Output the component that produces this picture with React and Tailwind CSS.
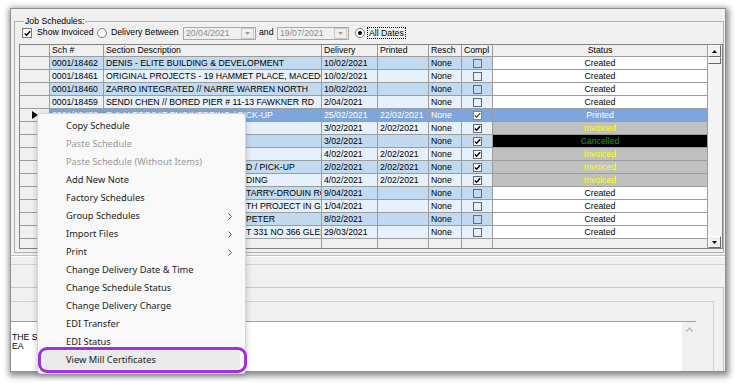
import React from "react";

const DARK = "bg-[#c2daf0]";
const LIGHT = "bg-[#e6f1fb]";
const SEL = "bg-[#7ea6dc]";

const rows = [
  { sch: "0001/18462", desc: "DENIS - ELITE BUILDING & DEVELOPMENT", del: "10/02/2021", pr: "", chk: false, status: "Created" },
  { sch: "0001/18461", desc: "ORIGINAL PROJECTS - 19 HAMMET PLACE, MACEDON", del: "10/02/2021", pr: "", chk: false, status: "Created" },
  { sch: "0001/18460", desc: "ZARRO INTEGRATED // NARRE WARREN NORTH", del: "10/02/2021", pr: "", chk: false, status: "Created" },
  { sch: "0001/18459", desc: "SENDI CHEN // BORED PIER # 11-13 FAWKNER RD", del: "2/04/2021", pr: "", chk: false, status: "Created" },
  { sch: "0001/18458", desc: "R & M TORCAT ENGINEERING / PICK-UP", del: "25/02/2021", pr: "22/02/2021", chk: true, status: "Printed", sel: true },
  { sch: "0001/18457", hid: "GEELONG REINFORCING", vis: "", del: "3/02/2021", pr: "2/02/2021", chk: true, status: "Invoiced" },
  { sch: "0001/18456", hid: "MESH SUPPLY CO", vis: "", del: "3/02/2021", pr: "", chk: true, status: "Cancelled" },
  { sch: "0001/18455", hid: "COASTAL FORMWORK", vis: "", del: "4/02/2021", pr: "2/02/2021", chk: true, status: "Invoiced" },
  { sch: "0001/18454", hid: "BENDIGO STEEL FIXING PTY LT", vis: "D / PICK-UP", del: "2/02/2021", pr: "2/02/2021", chk: true, status: "Invoiced" },
  { sch: "0001/18453", hid: "SUNBURY HOMES // CNR BUIL", vis: "DING", del: "4/02/2021", pr: "2/02/2021", chk: true, status: "Invoiced" },
  { sch: "0001/18452", hid: "WARRAGUL CIVIL // 88 YAR", vis: "TARRY-DROUIN ROAD", del: "9/04/2021", pr: "", chk: false, status: "Created" },
  { sch: "0001/18451", hid: "NORTHERN BUILD // NOR", vis: "TH PROJECT IN GIPPSLAND", del: "1/04/2021", pr: "", chk: false, status: "Created" },
  { sch: "0001/18450", hid: "ALPINE CONCRETE // ", vis: "PETER", del: "8/02/2021", pr: "", chk: false, status: "Created" },
  { sch: "0001/18449", hid: "KINGSTON HOMES // LO", vis: "T 331 NO 366 GLENFERN RD", del: "29/03/2021", pr: "", chk: false, status: "Created" },
];

const statusCls = {
  Created: "bg-white text-black",
  Invoiced: "bg-[#c0c0c0] text-[#ffff00]",
  Cancelled: "bg-black text-[#1f9c1f]",
  Printed: "bg-[#7ea6dc] text-white",
};

function Check({ color = "#000" }) {
  return (
    <svg width="7" height="7" viewBox="0 0 7 7" className="block">
      <path d="M0.8 3.4 L2.6 5.2 L6.2 1.2" fill="none" stroke={color} strokeWidth="1.4" />
    </svg>
  );
}

function Cell({ className = "", children }) {
  return (
    <div className={`h-[13px] border-r border-b border-[#9c9c9c] overflow-hidden whitespace-nowrap leading-[12px] ${className}`}>
      {children}
    </div>
  );
}

function GridRow({ r, i }) {
  const bg = r.sel ? SEL : i % 2 === 0 ? DARK : LIGHT;
  const txt = r.sel ? "text-white" : "text-black";
  const boxBorder = r.sel ? "border-[#c0763a]" : i % 2 === 0 ? "border-[#a8506a]" : "border-[#5e6a7c]";
  return (
    <>
      <Cell className="bg-[#f0f0f0] flex items-center pl-[12px]">
        {r.sel && (
          <svg width="6" height="8" viewBox="0 0 6 8" className="block">
            <path d="M0 0 L6 4 L0 8 Z" fill="#000" />
          </svg>
        )}
      </Cell>
      <Cell className={`${bg} ${txt} pl-[2px]`}>{r.sch}</Cell>
      <Cell className={`${bg} ${txt} pl-[2px]`}>
        {r.desc ? (
          r.desc
        ) : (
          <>
            <span className="inline-block w-[140px] overflow-hidden align-top">{r.hid}</span>
            <span>{r.vis}</span>
          </>
        )}
      </Cell>
      <Cell className={`${bg} ${txt} pl-[2px]`}>{r.del}</Cell>
      <Cell className={`${bg} ${txt} pl-[2px]`}>{r.pr}</Cell>
      <Cell className={`${bg} ${txt} pl-[2px]`}>None</Cell>
      <Cell className={`${bg} flex items-center justify-center`}>
        <div className={`w-[9px] h-[9px] border ${boxBorder} ${r.chk ? "bg-white" : ""} flex items-center justify-center`}>
          {r.chk && <Check color={r.sel ? "#8a4a20" : "#000"} />}
        </div>
      </Cell>
      <Cell className={`${statusCls[r.status]} text-center`}>{r.status}</Cell>
    </>
  );
}

function ScrollBtn({ up }) {
  return (
    <div className="h-[12px] bg-[#f0f0f0] border border-t-white border-l-white border-r-[#696969] border-b-[#696969] flex items-center justify-center">
      <svg width="5" height="3" viewBox="0 0 5 3" className="block">
        <path d={up ? "M0 3 L2.5 0 L5 3 Z" : "M0 0 L2.5 3 L5 0 Z"} fill="#000" />
      </svg>
    </div>
  );
}

function Radio({ checked }) {
  return (
    <div className="w-[10px] h-[10px] rounded-full border border-[#7a7a7a] bg-white flex items-center justify-center">
      {checked && <div className="w-[4px] h-[4px] rounded-full bg-black" />}
    </div>
  );
}

function DateBox({ value, w }) {
  return (
    <div className={`${w} h-[13px] border border-[#a9a9a9] bg-[#f0f0f0] flex items-center`}>
      <span className="pl-[2px] flex-1 text-[#8c8c8c] leading-[11px]">{value}</span>
      <div className="w-[13px] h-[11px] mr-[1px] border border-[#c8c8c8] flex items-center justify-center">
        <svg width="5" height="3" viewBox="0 0 5 3" className="block">
          <path d="M0 0 L2.5 3 L5 0 Z" fill="#a0a0a0" />
        </svg>
      </div>
    </div>
  );
}

const menuItems = [
  { t: "Copy Schedule" },
  { t: "Paste Schedule", dis: true },
  { t: "Paste Schedule (Without Items)", dis: true },
  { t: "Add New Note" },
  { t: "Factory Schedules" },
  { t: "Group Schedules", sub: true },
  { t: "Import Files", sub: true },
  { t: "Print", sub: true },
  { t: "Change Delivery Date & Time" },
  { t: "Change Schedule Status" },
  { t: "Change Delivery Charge" },
  { t: "EDI Transfer" },
  { t: "EDI Status" },
  { t: "View Mill Certificates", hover: true },
];

export default function App() {
  return (
    <div className="relative w-[735px] h-[383px] bg-white overflow-hidden font-['Liberation_Sans',Arial,sans-serif] text-[8.7px] text-black">
      {/* Window */}
      <div className="ml-[10px] mt-[8px] w-[716px] h-[364px] bg-[#f0f0f0] border border-[#8e8e8e] shadow-[1px_2px_6px_2px_rgba(0,0,0,0.45)] flex flex-col overflow-hidden">
        <fieldset className="mt-[7px] ml-[3px] mr-[1px] border border-[#b2b2b2] pl-[4px] pb-[3px]">
          <legend className="ml-[5px] px-[1px] leading-[10px]">Job Schedules:</legend>
          {/* filter row */}
          <div className="h-[14px] flex items-center">
            <div className="ml-[3px] w-[10px] h-[10px] border border-[#7a7a7a] bg-white flex items-center justify-center">
              <Check />
            </div>
            <span className="ml-[5px] w-[60px]">Show Invoiced</span>
            <Radio />
            <span className="ml-[4px] w-[72px]">Delivery Between</span>
            <DateBox value="20/04/2021" w="w-[73px]" />
            <span className="ml-[3px] w-[18px]">and</span>
            <DateBox value="19/07/2021" w="w-[72px]" />
            <div className="ml-[6px]">
              <Radio checked />
            </div>
            <span className="ml-[2px] px-[1px] h-[12px] leading-[10px] border border-dotted border-black">All Dates</span>
          </div>
          {/* grid */}
          <div className="mt-[4px] h-[205px] border border-[#828282] flex">
            <div className="w-[688px] flex flex-col">
              <div className="grid grid-cols-[30px_54px_218px_56px_51px_33px_31px_215px]">
                {["", "Sch #", "Section Description", "Delivery", "Printed", "Resch", "Compl"].map((h, k) => (
                  <div key={k} className="h-[12px] bg-[#f0f0f0] border-r border-b border-[#9c9c9c] pl-[2px] leading-[11px] whitespace-nowrap">
                    {h}
                  </div>
                ))}
                <div className="h-[12px] bg-[#f0f0f0] border-r border-b border-[#9c9c9c] text-center leading-[11px]">Status</div>
                {rows.map((r, i) => (
                  <GridRow key={i} r={r} i={i} />
                ))}
              </div>
              <div className="flex-1 grid grid-cols-[30px_54px_218px_56px_51px_33px_31px_215px]">
                {[0, 1, 2, 3, 4, 5, 6, 7].map((k) => (
                  <div key={k} className="border-r border-[#9c9c9c] bg-[#f0f0f0]" />
                ))}
              </div>
            </div>
            <div className="w-[13px] flex flex-col bg-[#f4f4f4]">
              <ScrollBtn up />
              <div className="h-[7px] bg-[#f0f0f0] border border-t-white border-l-white border-r-[#696969] border-b-[#696969]" />
              <div className="flex-1" />
              <ScrollBtn />
            </div>
          </div>
        </fieldset>

        {/* lower area */}
        <div className="mt-[2px] h-[9px] border-t border-[#c2c2c2] shadow-[inset_0_1px_0_#ffffff]" />
        <div className="h-[23px] border-t border-[#d4d4d4]" />
        <div className="flex-1 border-t border-r border-[#c8c8c8] mr-[1px] pr-[9px] pt-[13px] flex flex-col">
          <div className="flex-1 border-t border-r border-[#d0d0d0] pr-[17px] pt-[19px] flex flex-col">
            <div className="flex-1 flex border-t border-[#a0a0a0]">
              <div className="flex-1 bg-white pl-[1px] pt-[11px] leading-[9px]">
                <div>THE SITE IS OPEN 7AM - 3PM</div>
                <div>EA</div>
              </div>
              <div className="w-[14px] bg-[#f0f0f0] flex justify-center pt-[5px]">
                <svg width="7" height="5" viewBox="0 0 7 5" className="block">
                  <path d="M0.5 4.5 L3.5 1 L6.5 4.5" fill="none" stroke="#b8b8b8" strokeWidth="1.2" />
                </svg>
              </div>
            </div>
          </div>
        </div>
      </div>

      {/* Context menu */}
      <div className="absolute left-[37px] top-[113px] w-[209px] h-[261px] bg-[#f9f9f9] border border-[#d6d6d6] rounded-[4px] shadow-[0_2px_6px_rgba(0,0,0,0.22)] pt-[3px] font-['Noto_Sans',sans-serif] text-[9.3px]">
        {menuItems.map((m, k) => (
          <div
            key={k}
            className={`h-[18px] mx-[5px] pl-[23px] pr-[8px] flex items-center justify-between rounded-[4px] ${m.dis ? "text-[#9a9a9a]" : "text-[#1b1b1b]"} ${m.hover ? "bg-[#eaeaea]" : ""}`}
          >
            <span>{m.t}</span>
            {m.sub && (
              <svg width="4" height="7" viewBox="0 0 4 7" className="block">
                <path d="M0.5 0.5 L3.5 3.5 L0.5 6.5" fill="none" stroke="#555" strokeWidth="1" />
              </svg>
            )}
          </div>
        ))}
      </div>

      {/* purple highlight */}
      <div className="absolute left-[38px] top-[347px] w-[209px] h-[26px] border-[3px] border-[#9d2fe6] rounded-[9px]" />
    </div>
  );
}
